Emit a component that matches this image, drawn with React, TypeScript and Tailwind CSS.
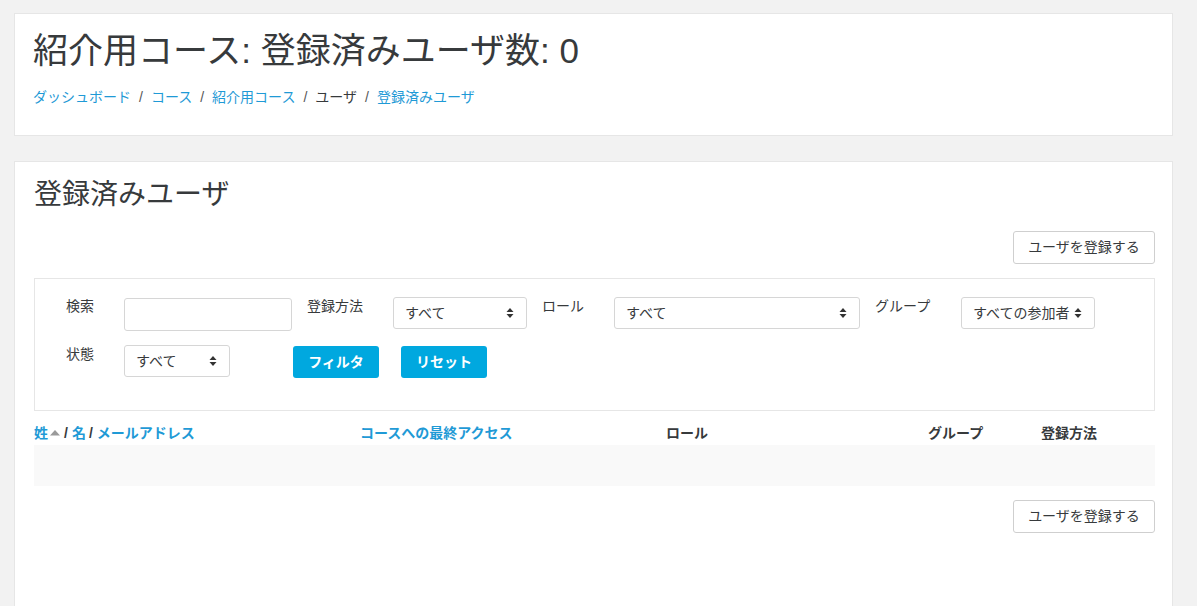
import React from "react";

const font = "font-['Liberation_Sans','Noto_Sans_CJK_JP',sans-serif]";

function Arrows() {
  return (
    <svg width="8" height="12" viewBox="0 0 8 12" className="shrink-0">
      <path d="M4 1 L7.5 5 L0.5 5 Z" fill="#333" />
      <path d="M4 11 L7.5 7 L0.5 7 Z" fill="#333" />
    </svg>
  );
}

function Select({ w, text }: { w: string; text: string }) {
  return (
    <div
      className={`${w} h-[32px] border border-[#d6d6d6] rounded-[3px] bg-white flex items-center justify-between pl-[11px] pr-[12px] text-[14px] text-[#373a3c]`}
    >
      <span className="whitespace-nowrap">{text}</span>
      <Arrows />
    </div>
  );
}

function AddButton() {
  return (
    <div className="flex justify-end">
      <button className="h-[33px] w-[142px] border border-[#cfcfcf] rounded-[3px] bg-white text-[14px] text-[#373a3c]">
        ユーザを登録する
      </button>
    </div>
  );
}

export default function App() {
  const link = "text-[#1f9ad6]";
  return (
    <div className={`${font} bg-[#f2f2f2] min-h-[606px] pl-[14px] pr-[24px] pt-[13px] text-[#373a3c]`}>
      <div className="bg-white border border-[#e6e6e6] h-[123px] pl-[18px] pr-[18px] pt-[15px]">
        <h1 className="text-[35px] leading-[44px] font-normal">
          紹介用コース: 登録済みユーザ数: 0
        </h1>
        <div className="mt-[14px] text-[14px] leading-[20px] flex items-center">
          <span className={link}>ダッシュボード</span>
          <span className="px-[8px] text-[#555]">/</span>
          <span className={link}>コース</span>
          <span className="px-[8px] text-[#555]">/</span>
          <span className={link}>紹介用コース</span>
          <span className="px-[8px] text-[#555]">/</span>
          <span>ユーザ</span>
          <span className="px-[8px] text-[#555]">/</span>
          <span className={link}>登録済みユーザ</span>
        </div>
      </div>

      <div className="mt-[25px] bg-white border border-[#e6e6e6] min-h-[460px] pl-[19px] pr-[17px] pt-[15px]">
        <h2 className="text-[28px] leading-[36px] font-normal">登録済みユーザ</h2>
        <div className="mt-[18px]">
          <AddButton />
        </div>

        <div className="mt-[14px] border border-[#e6e6e6] h-[133px] pl-[31px] pt-[18px]">
          <div className="flex items-start text-[14px] leading-[20px]">
            <span className="w-[58px] mt-[-1px]">検索</span>
            <div className="w-[168px] h-[33px] border border-[#d6d6d6] rounded-[3px] mt-[1px]" />
            <span className="ml-[15px] w-[86px] mt-[-1px]">登録方法</span>
            <Select w="w-[134px]" text="すべて" />
            <span className="ml-[15px] w-[72px] mt-[-1px]">ロール</span>
            <Select w="w-[246px]" text="すべて" />
            <span className="ml-[15px] w-[86px] mt-[-1px]">グループ</span>
            <Select w="w-[134px]" text="すべての参加者" />
          </div>
          <div className="flex items-start text-[14px] leading-[20px] mt-[14px]">
            <span className="w-[58px] mt-[-1px]">状態</span>
            <Select w="w-[106px]" text="すべて" />
            <button className="ml-[63px] mt-[1px] w-[86px] h-[32px] rounded-[3px] bg-[#00a8df] text-white font-bold text-[14px]">
              フィルタ
            </button>
            <button className="ml-[22px] mt-[1px] w-[86px] h-[32px] rounded-[3px] bg-[#00a8df] text-white font-bold text-[14px]">
              リセット
            </button>
          </div>
        </div>

        <div className="mt-[12px] flex items-center text-[14px] leading-[20px] font-bold h-[20px]">
          <div className="w-[326px] flex items-center">
            <span className={link}>姓</span>
            <svg width="12" height="8" viewBox="0 0 12 8" className="ml-[1px] mr-[3px]">
              <path d="M6 1 L11 6.5 L1 6.5 Z" fill="#9a9a9a" />
            </svg>
            <span>/</span>
            <span className={`${link} ml-[4px]`}>名</span>
            <span className="ml-[3px]">/</span>
            <span className={`${link} ml-[4px]`}>メールアドレス</span>
          </div>
          <div className={`w-[306px] ${link}`}>コースへの最終アクセス</div>
          <div className="w-[262px]">ロール</div>
          <div className="w-[113px]">グループ</div>
          <div>登録方法</div>
        </div>
        <div className="mt-[2px] h-[41px] bg-[#f9f9f9]" />
        <div className="mt-[14px]">
          <AddButton />
        </div>
      </div>
    </div>
  );
}
